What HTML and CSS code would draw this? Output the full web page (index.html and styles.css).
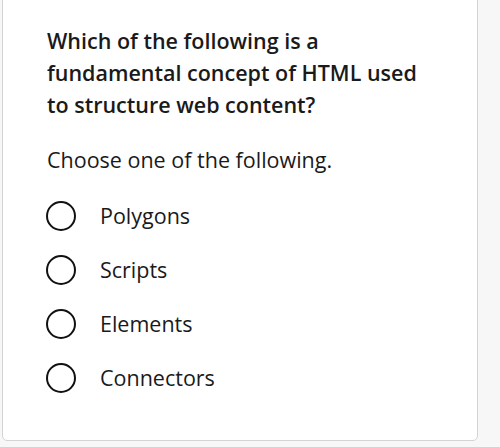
FILE: index.html
```html
<!DOCTYPE html>
<html>
<head>
<meta charset="utf-8">
<link rel="stylesheet" href="styles.css">
</head>
<body>
<div class="card">
  <div class="question">Which of the following is a fundamental concept of HTML used to structure web content?</div>
  <div class="prompt">Choose one of the following.</div>
  <div class="options">
    <label class="option"><span class="radio"></span><span class="label">Polygons</span></label>
    <label class="option"><span class="radio"></span><span class="label">Scripts</span></label>
    <label class="option"><span class="radio"></span><span class="label">Elements</span></label>
    <label class="option"><span class="radio"></span><span class="label">Connectors</span></label>
  </div>
</div>
</body>
</html>
```
FILE: styles.css
```css
html, body {
  margin: 0;
  padding: 0;
  background: #f7f7f7;
}
body {
  font-family: "Open Sans", "Liberation Sans", sans-serif;
  color: #1a1a1a;
  width: 500px;
  height: 447px;
  overflow: hidden;
}
.card {
  box-sizing: border-box;
  width: 476px;
  margin: -20px 0 0 2px;
  background: #fff;
  border: 1px solid #d4d4d4;
  border-radius: 5px;
  padding: 44px 20px 47px 44px;
}
.question {
  font-size: 21.5px;
  font-weight: 600;
  line-height: 32px;
  width: 385px;
}
.prompt {
  font-size: 21.5px;
  line-height: 32px;
  margin-top: 23px;
}
.options {
  display: flex;
  flex-direction: column;
  gap: 24px;
  margin-top: 25px;
}
.option {
  display: flex;
  align-items: center;
  height: 30px;
}
.radio {
  box-sizing: border-box;
  width: 30px;
  height: 30px;
  border: 2px solid #111;
  border-radius: 50%;
  margin-left: -1px;
  flex: none;
}
.label {
  font-size: 21.5px;
  line-height: 30px;
  margin-left: 24px;
}
```
